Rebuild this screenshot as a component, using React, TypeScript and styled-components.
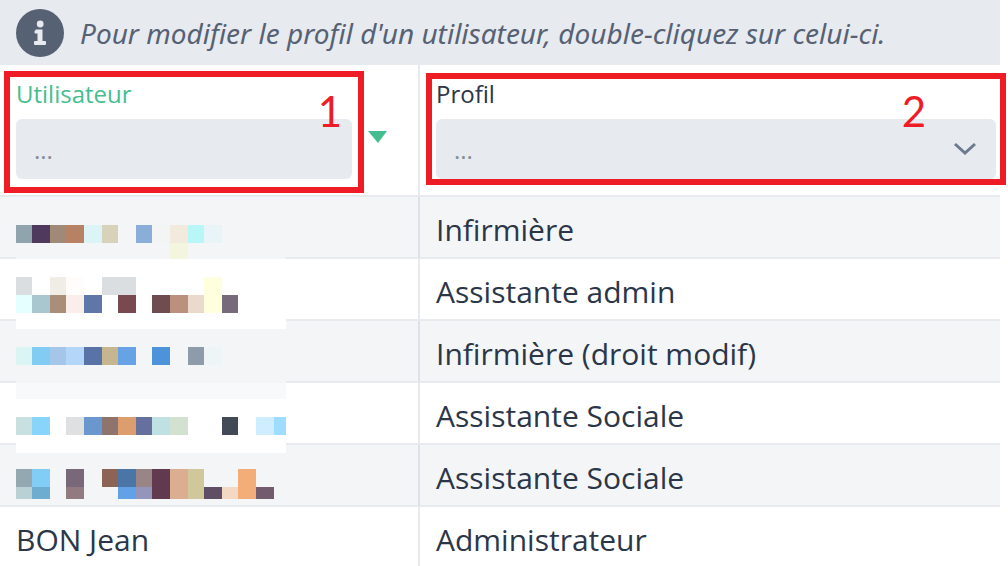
import React from 'react';
import styled, { createGlobalStyle } from 'styled-components';

const GlobalStyle = createGlobalStyle`
  * { box-sizing: border-box; }
  html, body { margin: 0; background: #fff; }
  body {
    font-family: "Open Sans", "Noto Sans", sans-serif;
    color: #2b3648;
  }
`;

const Page = styled.main`
  height: 100vh;
  overflow: hidden;
  padding-right: 8px;
`;

const Notice = styled.p`
  display: flex;
  align-items: center;
  gap: 16px;
  height: 65px;
  margin: 0;
  padding: 0 16px;
  background: #e7eaef;
  color: #566174;
  font-family: "Noto Sans", "Open Sans", sans-serif;
  font-size: 28px;
  font-style: italic;
  white-space: nowrap;
`;

const InfoIcon = styled.svg`
  flex: none;
  width: 48px;
  height: 48px;
`;

const Table = styled.table`
  width: 100%;
  table-layout: fixed;
  border-collapse: separate;
  border-spacing: 0;
`;

const HeadCell = styled.th<{ $width: string }>`
  width: ${(p) => p.$width};
  height: 132px;
  padding: 0 4px 0 16px;
  border-bottom: 2px solid #e7eaef;
  text-align: left;
  font-weight: 400;

  &:first-child { border-right: 2px solid #e7eaef; }
`;

const HeadContent = styled.div`
  display: flex;
  height: 130px;
`;

const Field = styled.div`
  position: relative;
  flex: 1;
  min-width: 0;
  padding-top: 12px;
`;

const Label = styled.label<{ $active?: boolean }>`
  display: block;
  height: 42px;
  color: ${(p) => (p.$active ? '#44be8f' : '#2b3648')};
  font-size: 24px;
  line-height: 34px;
`;

const controlStyle = `
  display: block;
  width: 100%;
  height: 60px;
  padding: 0 18px;
  border: 0;
  border-radius: 6px;
  outline: 0;
  appearance: none;
  background: #e7eaef;
  color: #868e99;
  font: 24px "Open Sans", "Noto Sans", sans-serif;
`;

const TextBox = styled.input`
  ${controlStyle}
  &::placeholder { color: #868e99; opacity: 1; }
`;

const SelectBox = styled.select`
  ${controlStyle}
`;

const Chevron = styled.svg`
  position: absolute;
  right: 19px;
  top: 76px;
  width: 24px;
  height: 16px;
  pointer-events: none;
`;

const SortButton = styled.button`
  display: flex;
  align-items: center;
  width: 62px;
  padding: 14px 0 0 16px;
  border: 0;
  background: none;
`;

const Callout = styled.div<{ $inset: string; $numberRight: number; $numberTop: number }>`
  position: absolute;
  inset: ${(p) => p.$inset};
  padding: ${(p) => `${p.$numberTop}px ${p.$numberRight}px 0 0`};
  border: 6px solid #ee1c25;
  color: #ee1c25;
  font-family: Lato, "Open Sans", sans-serif;
  font-size: 42px;
  line-height: 56px;
  text-align: right;
  pointer-events: none;
`;

const Row = styled.tr`
  &:nth-child(odd) { background: #f3f5f7; }
  &:nth-child(odd) td:first-child { border-right-color: #dde2e8; }
`;

const Cell = styled.td`
  height: 62px;
  padding: 0 16px;
  border-bottom: 2px solid #e7eaef;
  font-size: 30px;
  line-height: 66px;
  white-space: nowrap;

  &:first-child { border-right: 2px solid #e7eaef; }
`;

const Slot = styled.div`
  position: relative;
  height: 60px;
`;

const Mosaic = styled.svg`
  position: absolute;
  top: 0;
  left: 0;
  width: 270px;
  height: 70px;
`;

/* x, y, width, height, colour, measured from the top left of the name slot */
type Block = [number, number, number, number, string];

const mosaics: Block[][] = [
  [
    [0, 60, 270, 2, '#f3f5f7'],
    [0, 28, 16, 18, '#90a4ae'], [16, 28, 18, 18, '#4f3a5d'], [34, 28, 16, 18, '#a18977'],
    [50, 28, 18, 18, '#b78263'], [68, 28, 18, 18, '#dcf4f6'], [86, 28, 16, 18, '#d9d2bb'],
    [120, 28, 16, 18, '#8aaed7'], [136, 28, 18, 18, '#f3f5f4'], [154, 28, 18, 18, '#f3eade'],
    [172, 28, 16, 18, '#b9f6f8'], [188, 28, 18, 18, '#e8f4f7'], [154, 46, 18, 16, '#f3f5de'],
  ],
  [
    [0, 0, 270, 70, '#ffffff'],
    [0, 18, 16, 18, '#dadee0'], [34, 18, 16, 18, '#f0ede7'], [50, 18, 18, 18, '#fffdfb'],
    [86, 18, 34, 18, '#dadee0'], [188, 18, 18, 36, '#ffffde'],
    [0, 36, 16, 18, '#e3ffff'], [16, 36, 18, 18, '#a8c7ce'], [34, 36, 16, 18, '#aa8e79'],
    [50, 36, 18, 18, '#faeeea'], [68, 36, 18, 18, '#5e77a8'], [102, 36, 18, 18, '#78494f'],
    [136, 36, 18, 18, '#6f4c4f'], [154, 36, 18, 18, '#bb907c'], [172, 36, 16, 18, '#eadacd'],
    [206, 36, 16, 18, '#776a7a'],
  ],
  [
    [0, 60, 270, 2, '#f3f5f7'],
    [0, 26, 16, 18, '#dbf5f5'], [16, 26, 18, 18, '#82ccf4'], [34, 26, 16, 18, '#a5c5e9'],
    [50, 26, 18, 18, '#b4d6f8'], [68, 26, 18, 18, '#5a73a6'], [86, 26, 16, 18, '#c6b68f'],
    [102, 26, 18, 18, '#67a3e4'], [136, 26, 18, 18, '#4e93da'], [172, 26, 16, 18, '#8d9bab'],
    [188, 26, 18, 18, '#eef5f7'],
  ],
  [
    [0, 0, 270, 16, '#f8f9fb'], [0, 16, 270, 54, '#ffffff'],
    [0, 34, 16, 18, '#c9e0e1'], [16, 34, 18, 18, '#89d4fb'], [50, 34, 18, 18, '#dfe0e2'],
    [68, 34, 18, 18, '#6a98ce'], [86, 34, 16, 18, '#8f746e'], [102, 34, 18, 18, '#dc9d6f'],
    [120, 34, 16, 18, '#66709e'], [136, 34, 18, 18, '#c0e1e3'], [154, 34, 18, 18, '#d3e1d0'],
    [206, 34, 16, 18, '#434a57'], [240, 34, 18, 18, '#ceeeff'], [258, 34, 12, 18, '#9eddff'],
  ],
  [
    [0, 24, 16, 18, '#94a8b2'], [16, 24, 18, 18, '#82cdf5'], [50, 24, 18, 18, '#796879'],
    [86, 24, 16, 18, '#8b6455'], [102, 24, 18, 18, '#4b74a7'], [120, 24, 16, 18, '#998585'],
    [136, 24, 18, 30, '#613a50'], [154, 24, 18, 30, '#dbae92'], [172, 24, 16, 30, '#d0c89b'],
    [222, 24, 18, 30, '#f3ad78'],
    [0, 42, 16, 12, '#b9d1d4'], [16, 42, 18, 12, '#6fadd0'], [50, 42, 18, 12, '#917b80'],
    [102, 42, 18, 12, '#62a1e6'], [120, 42, 16, 12, '#9594ba'], [188, 42, 18, 12, '#5f4f64'],
    [206, 42, 16, 12, '#f3d8c4'], [240, 42, 18, 12, '#725b6c'],
  ],
];

interface User {
  name?: string;
  mosaic?: Block[];
  profile: string;
}

const users: User[] = [
  { mosaic: mosaics[0], profile: 'Infirmière' },
  { mosaic: mosaics[1], profile: 'Assistante admin' },
  { mosaic: mosaics[2], profile: 'Infirmière (droit modif)' },
  { mosaic: mosaics[3], profile: 'Assistante Sociale' },
  { mosaic: mosaics[4], profile: 'Assistante Sociale' },
  { name: 'BON Jean', profile: 'Administrateur' },
];

function HiddenName({ blocks }: { blocks: Block[] }) {
  return (
    <Mosaic viewBox="0 0 270 70" shapeRendering="crispEdges" aria-hidden="true">
      {blocks.map(([x, y, w, h, fill], i) => (
        <rect key={i} x={x} y={y} width={w} height={h} fill={fill} />
      ))}
    </Mosaic>
  );
}

export default function App() {
  return (
    <>
      <GlobalStyle />
      <Page>
        <Notice>
          <InfoIcon viewBox="0 0 48 48" aria-hidden="true">
            <circle cx="24" cy="24" r="24" fill="#566174" />
            <circle cx="24.2" cy="15" r="3.4" fill="#e7eaef" />
            <path
              d="M19.5 20.5h7V32H29q1 0 1 1v2q0 1-1 1H19q-1 0-1-1v-2q0-1 1-1h2.5v-7.5h-2q-1 0-1-1v-1q0-1 1-1z"
              fill="#e7eaef"
            />
          </InfoIcon>
          Pour modifier le profil d'un utilisateur, double-cliquez sur celui-ci.
        </Notice>
        <Table>
          <thead>
            <tr>
              <HeadCell $width="42%">
                <HeadContent>
                  <Field>
                    <Label htmlFor="user" $active>Utilisateur</Label>
                    <TextBox id="user" type="text" placeholder="..." />
                    <Callout $inset="6px -12px 2px" $numberTop={6} $numberRight={16}>1</Callout>
                  </Field>
                  <SortButton type="button" aria-label="Trier par utilisateur">
                    <svg width="20" height="12" viewBox="0 0 20 12">
                      <path d="M0 0h19L10 12z" fill="#44be8f" />
                    </svg>
                  </SortButton>
                </HeadContent>
              </HeadCell>
              <HeadCell $width="58%">
                <HeadContent>
                  <Field>
                    <Label htmlFor="profile">Profil</Label>
                    <SelectBox id="profile" defaultValue="">
                      <option value="">...</option>
                    </SelectBox>
                    <Chevron viewBox="0 0 24 16" aria-hidden="true">
                      <path d="M2 3l10 9 10-9" fill="none" stroke="#6c7a90" strokeWidth="3" />
                    </Chevron>
                    <Callout $inset="8px -10px 10px" $numberTop={4} $numberRight={74}>2</Callout>
                  </Field>
                </HeadContent>
              </HeadCell>
            </tr>
          </thead>
          <tbody>
            {users.map((user, i) => (
              <Row key={i}>
                <Cell>
                  <Slot>
                    {user.name}
                    {user.mosaic && <HiddenName blocks={user.mosaic} />}
                  </Slot>
                </Cell>
                <Cell>
                  <Slot>{user.profile}</Slot>
                </Cell>
              </Row>
            ))}
          </tbody>
        </Table>
      </Page>
    </>
  );
}
